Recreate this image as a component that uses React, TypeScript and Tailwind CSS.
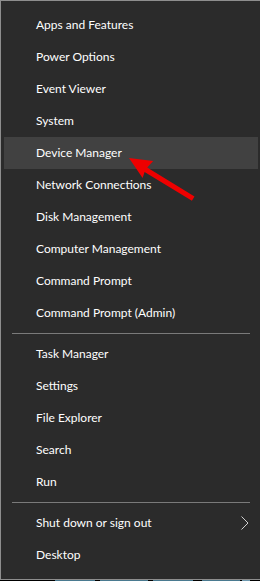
import React from "react";

const groups: string[][] = [
  [
    "Apps and Features",
    "Power Options",
    "Event Viewer",
    "System",
    "Device Manager",
    "Network Connections",
    "Disk Management",
    "Computer Management",
    "Command Prompt",
    "Command Prompt (Admin)",
  ],
  ["Task Manager", "Settings", "File Explorer", "Search", "Run"],
  ["Shut down or sign out", "Desktop"],
];

function MenuItem({ label, active, submenu }: { label: string; active?: boolean; submenu?: boolean }) {
  return (
    <div
      className={`ml-[3px] mr-[2px] h-[32px] pl-[32px] pr-[9px] flex items-center justify-between text-[12px] text-white ${
        active ? "bg-[#414141]" : ""
      }`}
    >
      <span>{label}</span>
      {submenu && (
        <svg width="8" height="14" viewBox="0 0 8 14" className="text-[#d0d0d0]">
          <path d="M0.5 0.5 L7 7 L0.5 13.5" fill="none" stroke="currentColor" strokeWidth="1" />
        </svg>
      )}
    </div>
  );
}

export default function App() {
  return (
    <div
      className="relative w-[260px] h-[581px] bg-black overflow-hidden"
      style={{ fontFamily: "Lato, 'Liberation Sans', sans-serif" }}
    >
      <div className="h-[580px] bg-[#2b2b2b] border-l border-t border-b border-[#8e8e8e] pt-[8px] pb-[8px]">
        {groups.map((items, gi) => (
          <div key={gi}>
            {gi > 0 && <div className="ml-[11px] mr-[10px] my-[4px] h-px bg-[#7a7a7a]" />}
            {items.map((label) => (
              <MenuItem
                key={label}
                label={label}
                active={label === "Device Manager"}
                submenu={label === "Shut down or sign out"}
              />
            ))}
          </div>
        ))}
      </div>

      {/* taskbar peeking below */}
      <div className="flex h-px">
        <div className="w-[55px] bg-black" />
        <div className="w-[40px] bg-[#4a7a90]" />
        <div className="w-[5px] bg-black" />
        <div className="w-[48px] bg-[#4a7a90]" />
        <div className="w-[5px] bg-black" />
        <div className="w-[40px] bg-[#4a7a90]" />
        <div className="w-[9px] bg-black" />
        <div className="w-[38px] bg-[#4a7a90]" />
        <div className="w-[2px] bg-black" />
        <div className="w-[8px] bg-[#6f9ab0]" />
      </div>

      {/* red annotation arrow */}
      <svg className="absolute left-0 top-0 pointer-events-none" width="260" height="581">
        <polygon
          points="129,158 153.2,160.9 147.2,167.6 194.5,196.5 191.9,200.8 144.6,171.9 142.6,178"
          fill="#ee0000"
        />
      </svg>
    </div>
  );
}
